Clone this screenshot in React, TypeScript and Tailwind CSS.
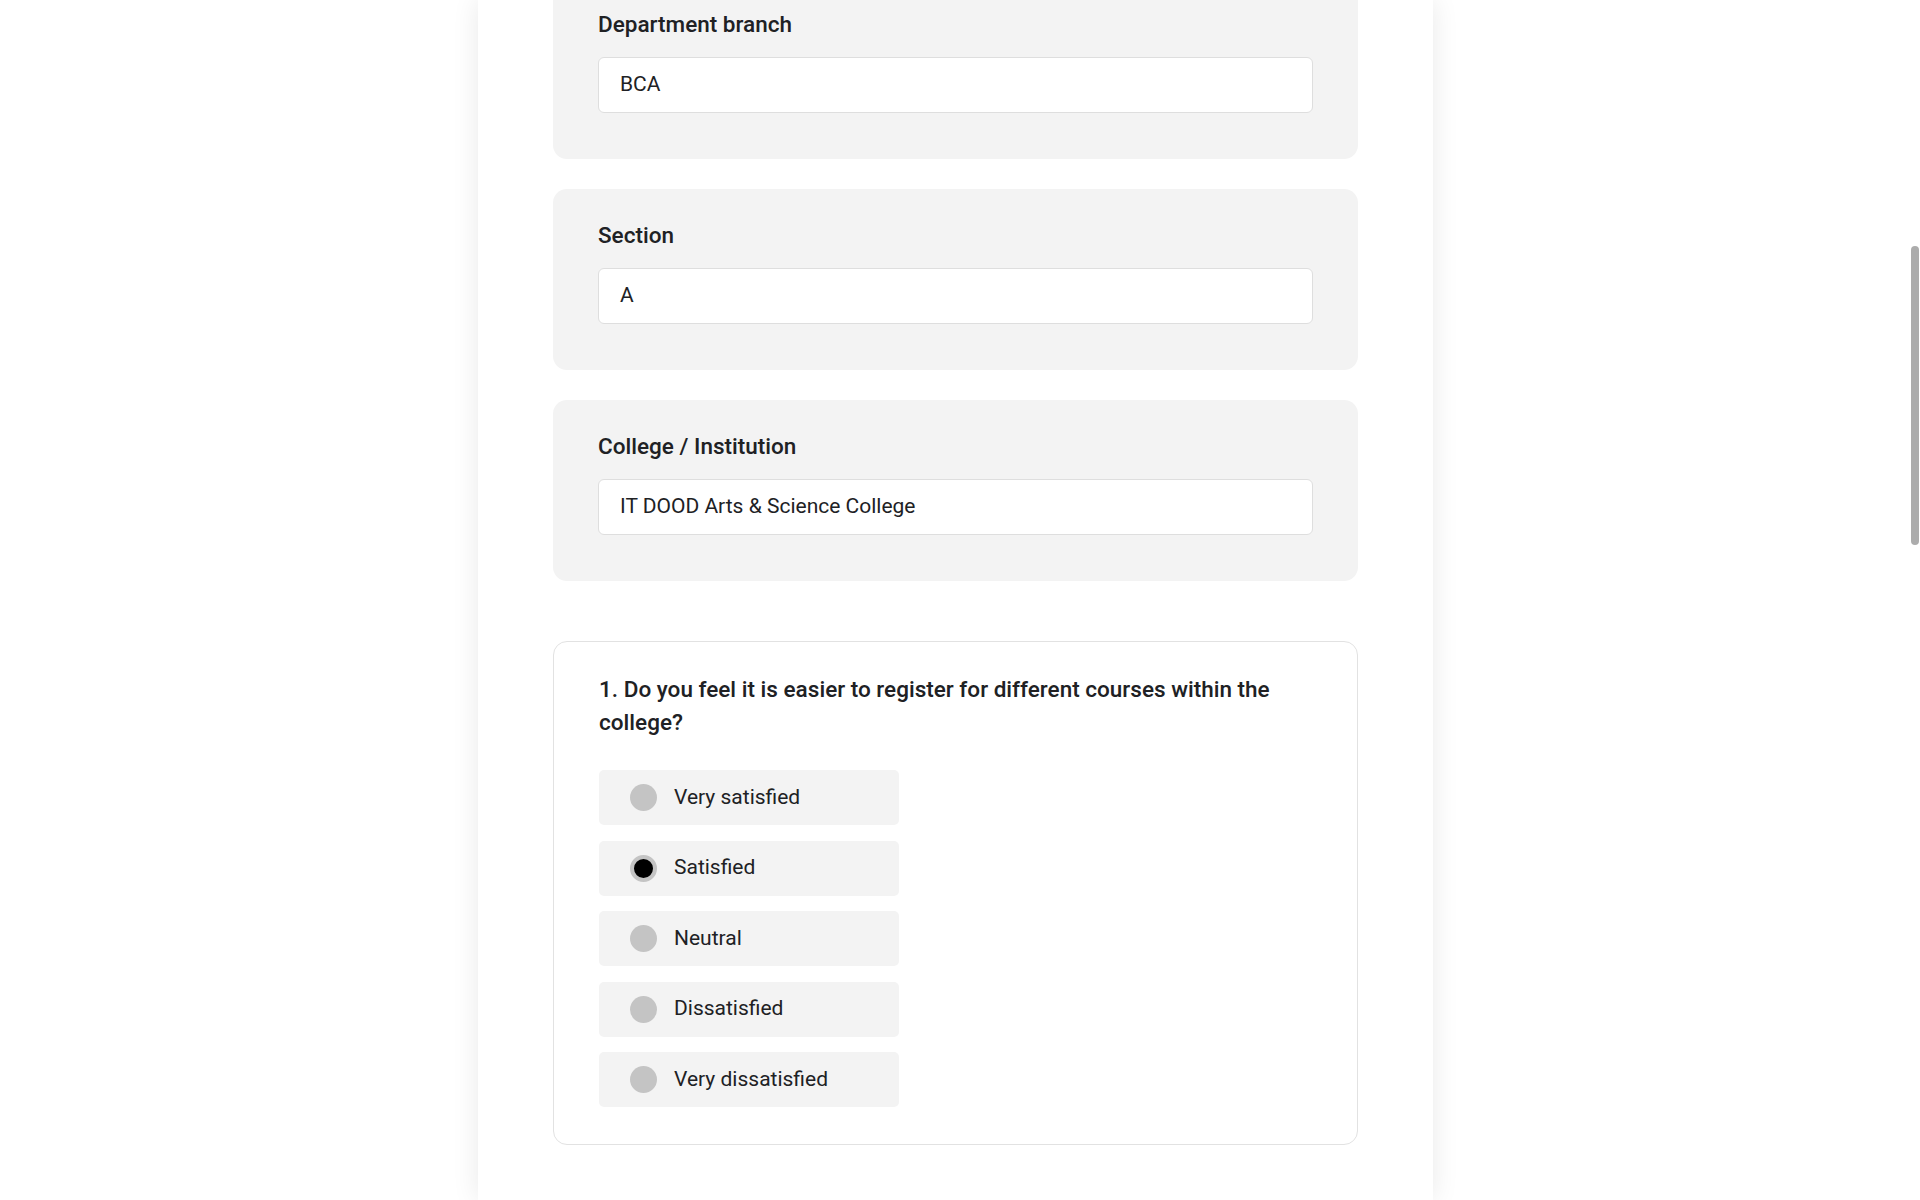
import React from 'react';

type Field = { label: string; value: string };

const fields: Field[] = [
  { label: 'Department branch', value: 'BCA' },
  { label: 'Section', value: 'A' },
  { label: 'College / Institution', value: 'IT DOOD Arts & Science College' },
];

const options = ['Very satisfied', 'Satisfied', 'Neutral', 'Dissatisfied', 'Very dissatisfied'];

// medium weight for headings
const heading = "font-['Roboto_Medium','Roboto',sans-serif] font-medium";

function FieldCard({ label, value }: Field) {
  return (
    <div className="bg-[#f3f3f3] rounded-[14px] px-[45px] pt-[30px] pb-[46px]">
      <div className={`${heading} text-[22.5px] leading-[33px] text-[#202124] mb-[16px]`}>{label}</div>
      <div className="h-[56px] bg-white border border-[#dedede] rounded-[6px] flex items-center px-[21px] text-[21px] text-[#202124]">
        {value}
      </div>
    </div>
  );
}

function Option({ text, checked }: { text: string; checked: boolean }) {
  return (
    <div className="w-[300px] h-[55px] bg-[#f3f3f3] rounded-[5px] flex items-center pl-[31px]">
      {checked ? (
        <span className="w-[27px] h-[27px] rounded-full bg-black border-4 border-[#c4c4c4] box-border" />
      ) : (
        <span className="w-[27px] h-[27px] rounded-full bg-[#c4c4c4]" />
      )}
      <span className="ml-[17px] text-[21px] text-[#202124]">{text}</span>
    </div>
  );
}

function App() {
  const selected = 'Satisfied';

  return (
    <div className="h-screen overflow-hidden flex bg-white font-['Roboto',sans-serif]">
      <main className="flex-1 flex justify-center">
        <div className="w-[955px] h-full bg-white shadow-[0_0_26px_rgba(0,0,0,0.09)] px-[75px]">
          <div className="relative -mt-[22px] flex flex-col gap-[30px]">
            {/* floating element above, only its shadow is visible */}
            <div className="absolute -top-[60px] left-[243px] w-[330px] h-[58px] rounded-[30px] bg-[#f3f3f3] shadow-[0_2px_10px_rgba(0,0,0,0.08)]" />
            {fields.map((f) => (
              <FieldCard key={f.label} label={f.label} value={f.value} />
            ))}
          </div>

          <section className="mt-[60px] border border-[#e2e2e2] rounded-[14px] px-[45px] pt-[31px] pb-[37px]">
            <h2 className={`${heading} text-[22.5px] leading-[33px] text-[#202124] mb-[31px]`}>
              1. Do you feel it is easier to register for different courses within the college?
            </h2>
            <div className="flex flex-col gap-[15.5px]">
              {options.map((o) => (
                <Option key={o} text={o} checked={o === selected} />
              ))}
            </div>
          </section>
        </div>
      </main>
      <div className="w-[9px] h-full">
        <div className="mt-[246px] h-[299px] w-[8px] rounded-full bg-[#acacac]" />
      </div>
    </div>
  );
}

export default App;
